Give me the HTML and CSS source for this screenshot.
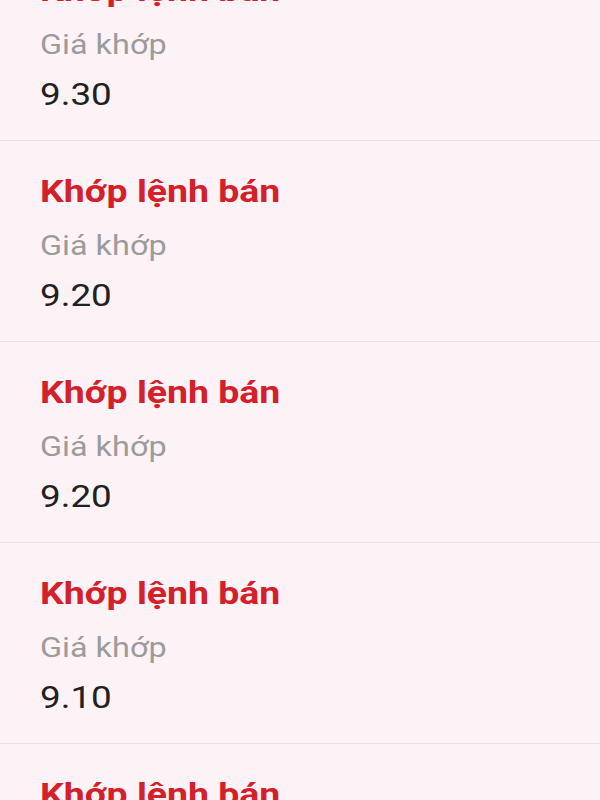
FILE: index.html
```html
<!DOCTYPE html>
<html lang="vi">
<head>
    <meta charset="UTF-8">
    <meta name="viewport" content="width=device-width, initial-scale=1.0">
    <title>Lịch sử khớp lệnh</title>
    <link rel="stylesheet" href="styles.css">
</head>
<body>
    <ul class="match-list">
        <li class="match-item">
            <div class="match-title"><span>Khớp lệnh bán</span></div>
            <div class="match-label"><span>Giá khớp</span></div>
            <div class="match-price"><span>9.30</span></div>
        </li>
        <li class="match-item">
            <div class="match-title"><span>Khớp lệnh bán</span></div>
            <div class="match-label"><span>Giá khớp</span></div>
            <div class="match-price"><span>9.20</span></div>
        </li>
        <li class="match-item">
            <div class="match-title"><span>Khớp lệnh bán</span></div>
            <div class="match-label"><span>Giá khớp</span></div>
            <div class="match-price"><span>9.20</span></div>
        </li>
        <li class="match-item">
            <div class="match-title"><span>Khớp lệnh bán</span></div>
            <div class="match-label"><span>Giá khớp</span></div>
            <div class="match-price"><span>9.10</span></div>
        </li>
        <li class="match-item">
            <div class="match-title"><span>Khớp lệnh bán</span></div>
            <div class="match-label"><span>Giá khớp</span></div>
            <div class="match-price"><span>9.10</span></div>
        </li>
    </ul>
</body>
</html>
```

FILE: styles.css
```css
body {
    margin: 0;
    padding: 0;
    background-color: #fdf3f6;
    font-family: Roboto, "Noto Sans", sans-serif;
    overflow: hidden;
}

.match-list {
    list-style: none;
    margin: -60px 0 0 0; /* list is scrolled a little */
    padding: 0;
}

.match-item {
    padding: 22px 40px 23px 40px;
    border-bottom: 1.5px solid #ece2e5;
}

/* the app's text is drawn a bit wide */
.match-item span {
    display: inline-block;
    transform-origin: left center;
}

.match-title {
    color: #d3202a;
    font-size: 32px;
    font-weight: 700;
    line-height: 56px;
}

.match-title span {
    transform: scaleX(1.17);
}

.match-label {
    color: #9b9b9b;
    font-size: 27px;
    line-height: 54px;
}

.match-label span {
    transform: scaleX(1.2);
}

.match-price {
    color: #212121;
    font-size: 32px;
    line-height: 45px;
}

.match-price span {
    transform: scaleX(1.15);
}
```
